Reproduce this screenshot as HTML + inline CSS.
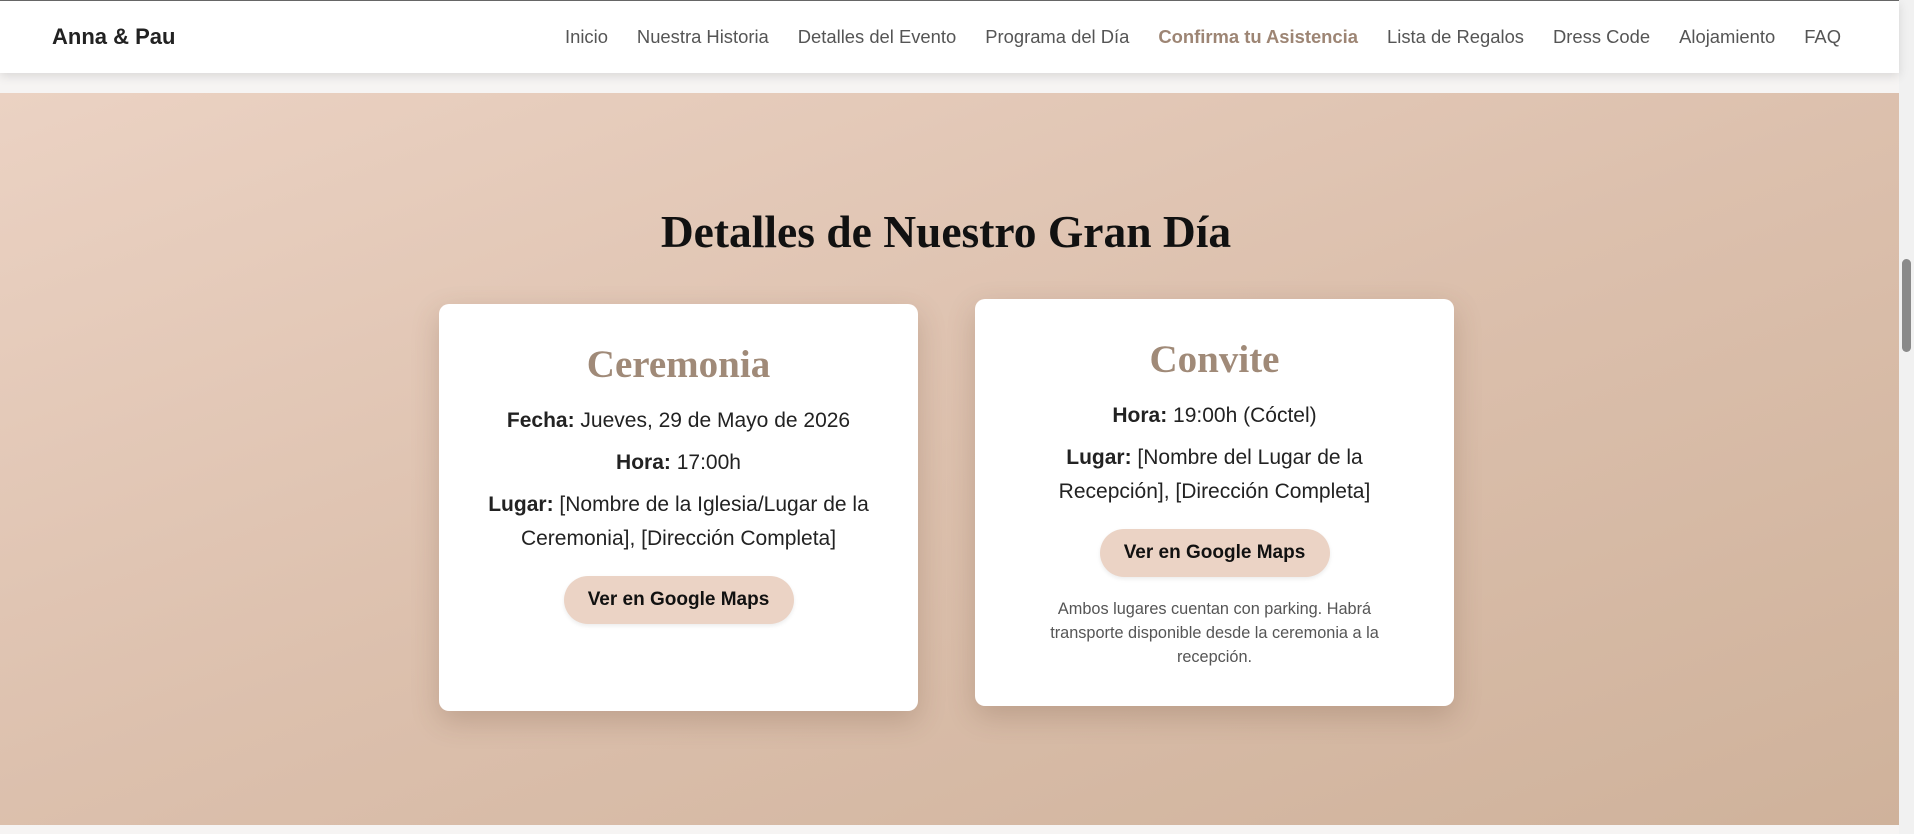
<!DOCTYPE html>
<html><head><meta charset="utf-8"><style>
*{margin:0;padding:0;box-sizing:border-box}
body{width:1914px;height:834px;overflow:hidden;background:#f6f4f3;font-family:"Liberation Sans",sans-serif;position:relative}
.top{position:absolute;left:0;top:0;width:1914px;height:2px;background:#6a6a6a}
nav{position:absolute;left:0;top:1px;width:1899px;height:72px;background:#fff;box-shadow:0 3px 10px rgba(0,0,0,.12);z-index:2}
.brand{position:absolute;left:52px;top:23px;font-size:22px;font-weight:bold;color:#222}
.links{position:absolute;right:58px;top:25px;display:flex;gap:29px;font-size:18.4px;color:#555}
.links .a{color:#9d8574;font-weight:bold}
.sec{position:absolute;left:0;top:93px;width:1899px;height:732px;background:linear-gradient(160deg,#ebd2c3 0%,#dcc0ad 50%,#cfb29b 100%)}
.sb{position:absolute;right:0;top:0;width:15px;height:834px;background:#f1f1f1}
.thumb{position:absolute;right:3px;top:259px;width:9px;height:93px;background:#8a8a8a;border-radius:5px}
h1{position:absolute;left:0;width:1892px;top:205px;text-align:center;font-family:"Liberation Serif",serif;font-weight:bold;font-size:45.5px;color:#111}
.card{position:absolute;width:479px;height:407px;background:#fff;border-radius:10px;box-shadow:0 10px 28px rgba(90,60,40,.22);text-align:center;color:#222}
.card h2{font-family:"Liberation Serif",serif;font-weight:bold;font-size:39px;color:#a08a78;margin-top:36px;line-height:50px}
.card p{font-size:21px;line-height:34px;margin-top:8px;padding:0 40px}
.btn{display:inline-block;width:230px;height:48px;line-height:48px;border-radius:24px;background:#ebd3c5;font-weight:bold;font-size:19px;color:#111;margin-top:20px;box-shadow:0 2px 4px rgba(0,0,0,.08)}
.note{font-size:16.3px!important;line-height:24px!important;color:#555;padding:0 60px!important;margin-top:20px!important}
</style></head><body>
<div class="top"></div>
<nav><div class="brand">Anna &amp; Pau</div>
<div class="links"><span>Inicio</span><span>Nuestra Historia</span><span>Detalles del Evento</span><span>Programa del Día</span><span class="a">Confirma tu Asistencia</span><span>Lista de Regalos</span><span>Dress Code</span><span>Alojamiento</span><span>FAQ</span></div></nav>
<div class="sec"></div>
<h1>Detalles de Nuestro Gran Día</h1>
<div class="card" style="left:439px;top:304px">
<h2>Ceremonia</h2>
<p style="margin-top:14px"><b>Fecha:</b> Jueves, 29 de Mayo de 2026</p>
<p><b>Hora:</b> 17:00h</p>
<p><b>Lugar:</b> [Nombre de la Iglesia/Lugar de la Ceremonia], [Dirección Completa]</p>
<div class="btn">Ver en Google Maps</div>
</div>
<div class="card" style="left:975px;top:299px">
<h2>Convite</h2>
<p style="margin-top:14px"><b>Hora:</b> 19:00h (Cóctel)</p>
<p style="padding:0 70px"><b>Lugar:</b> [Nombre del Lugar de la Recepción], [Dirección Completa]</p>
<div class="btn">Ver en Google Maps</div>
<p class="note">Ambos lugares cuentan con parking. Habrá transporte disponible desde la ceremonia a la recepción.</p>
</div>
<div class="sb"><div class="thumb"></div></div>
</body></html>
